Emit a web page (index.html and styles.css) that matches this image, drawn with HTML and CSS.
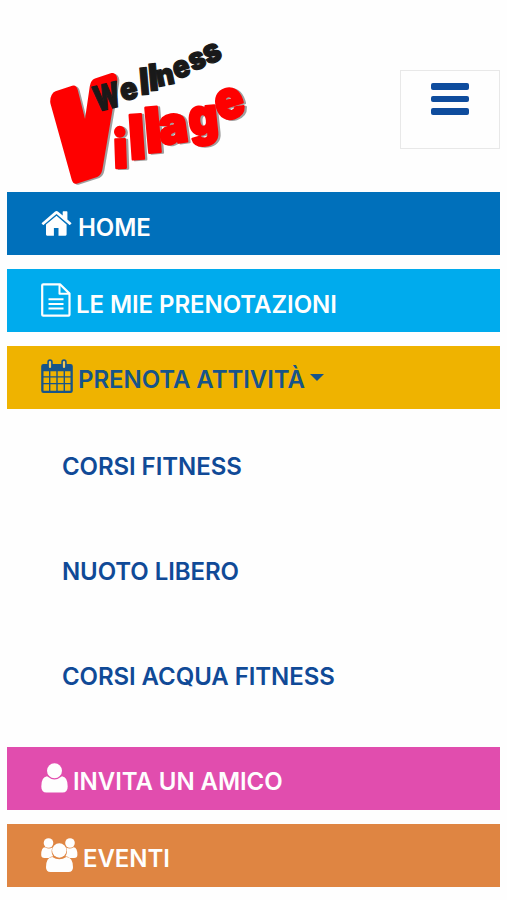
FILE: index.html
```html
<!DOCTYPE html>
<html lang="it">
<head>
<meta charset="utf-8">
<title>Wellness Village</title>
<link rel="stylesheet" href="styles.css">
</head>
<body>
<header class="header">
  <svg class="logo" viewBox="0 0 220 160" role="img" aria-label="Wellness Village">
    <g class="village shadow" transform="translate(2.2 .8)">
      <text class="initial" transform="translate(46.500 142) skewY(-18) skewX(2) scale(.66 1)" font-size="113">V</text>
      <text transform="translate(74 138) rotate(-2) scale(.92 1)" font-size="52">i</text>
      <text transform="translate(90 129.500) rotate(-4) scale(.93 1)" font-size="61">l</text>
      <text transform="translate(106.500 123) rotate(-5) scale(.93 1)" font-size="62">l</text>
      <text transform="translate(121 115) rotate(-8) scale(.93 1)" font-size="52">a</text>
      <text transform="translate(150 106) rotate(-6) scale(.9 1)" font-size="51">g</text>
      <text transform="translate(180 92) rotate(-17) scale(.88 1)" font-size="54">e</text>
    </g>
    <g class="village">
      <text class="initial" transform="translate(46.500 142) skewY(-18) skewX(2) scale(.66 1)" font-size="113">V</text>
      <text transform="translate(74 138) rotate(-2) scale(.92 1)" font-size="52">i</text>
      <text transform="translate(90 129.500) rotate(-4) scale(.93 1)" font-size="61">l</text>
      <text transform="translate(106.500 123) rotate(-5) scale(.93 1)" font-size="62">l</text>
      <text transform="translate(121 115) rotate(-8) scale(.93 1)" font-size="52">a</text>
      <text transform="translate(150 106) rotate(-6) scale(.9 1)" font-size="51">g</text>
      <text transform="translate(180 92) rotate(-17) scale(.88 1)" font-size="54">e</text>
    </g>
    <g class="wellness">
      <text transform="translate(57 82) rotate(-14) scale(.7 1)" font-size="35">W</text>
      <text transform="translate(82.500 71.500) rotate(-14) scale(.93 1)" font-size="31">e</text>
      <text transform="translate(100.500 65) rotate(-5) scale(.9 1)" font-size="37">l</text>
      <text transform="translate(109.500 61) rotate(-5) scale(.9 1)" font-size="37">l</text>
      <text transform="translate(118 57) rotate(-12) scale(.93 1)" font-size="30">n</text>
      <text transform="translate(136 49.500) rotate(-18) scale(.9 1)" font-size="31">e</text>
      <text transform="translate(152.500 41.500) rotate(-20) scale(.9 1)" font-size="31">s</text>
      <text transform="translate(167.500 35) rotate(-22) scale(.9 1)" font-size="33">s</text>
    </g>
  </svg>
  <button class="toggle" aria-label="Menu">
    <span class="bar"></span><span class="bar"></span><span class="bar"></span>
  </button>
</header>
<nav class="menu">
  <a class="item home">
    <svg class="icon" width="32" height="63" viewBox="0 0 32 63" fill="currentColor">
      <path d="M15.500 23.800 5 32.600V42.600q0 1.100 1.100 1.100h6.800v-7.800h4.600v7.800h7q1.100 0 1.100-1.100V32.600z"/>
      <path d="M.5 31.200 13.800 19.800q1.700-1.400 3.400 0l4.500 3.800v-3.700q0-.6.6-.6h3.500q.6 0 .6.6v7.600l4.200 3.700-1.400 1.600q-.5.4-1 0L15.500 22 2.800 32.800q-.5.4-1 0z"/>
    </svg>
    <span class="label">HOME</span>
  </a>
  <a class="item bookings">
    <svg class="icon" width="30" height="63" viewBox="0 0 30 63" fill="none" stroke="currentColor" stroke-width="2.200" stroke-linejoin="round">
      <path d="M1.200 16.300q0-1 1-1H19l9.500 9.300v21.100q0 1-1 1H2.200q-1 0-1-1z"/>
      <path d="M18.500 15.300v9.500h10M7.500 30.300h15M7.500 34.900h15M7.500 39.500h15" stroke-width="2"/>
    </svg>
    <span class="label">LE MIE PRENOTAZIONI</span>
  </a>
  <a class="item activities">
    <svg class="icon" width="32" height="63" viewBox="0 0 32 63">
      <path fill="currentColor" fill-rule="evenodd" d="M2.500 18H29.500q2.300 0 2.300 2.300V44.700q0 2.300-2.300 2.300H2.500Q.2 47 .2 44.700V20.300Q.2 18 2.500 18ZM2.500 25.300V30.200H8V25.300ZM9.400 25.300V30.200H15.300V25.300ZM16.700 25.300V30.200H22.600V25.300ZM24 25.300V30.200H29.500V25.300ZM2.500 31.500V37H8V31.500ZM9.400 31.500V37H15.300V31.500ZM16.700 31.500V37H22.600V31.500ZM24 31.500V37H29.500V31.500ZM2.500 38.300V44.800H8V38.300ZM9.400 38.300V44.800H15.300V38.300ZM16.700 38.300V44.800H22.600V38.300ZM24 38.300V44.800H29.500V38.300Z"/>
      <g stroke-linecap="round"><path d="M9 16v5M23 16v5" stroke="currentColor" stroke-width="5.400"/><path d="M9 16v5M23 16v5" stroke="#f0c860" stroke-width="2.200"/></g>
    </svg>
    <span class="label">PRENOTA ATTIVITÀ</span>
    <span class="caret"></span>
  </a>
  <div class="submenu">
    <a class="subitem">CORSI FITNESS</a>
    <a class="subitem">NUOTO LIBERO</a>
    <a class="subitem">CORSI ACQUA FITNESS</a>
  </div>
  <a class="item invite">
    <svg class="icon" width="27" height="63" viewBox="0 0 27 63" fill="currentColor">
      <circle cx="13.500" cy="23.700" r="7.500"/>
      <path d="M6 29.300Q13.500 35.500 21 29.300 26.700 30 26.700 39.500 26.700 45.500 21.500 45.500H5.500Q.3 45.500.3 39.500.3 30 6 29.300Z"/>
    </svg>
    <span class="label">INVITA UN AMICO</span>
  </a>
  <a class="item events">
    <svg class="icon" width="37" height="63" viewBox="0 0 37 63" fill="currentColor">
      <circle cx="7.500" cy="19" r="4.800"/><circle cx="29" cy="19" r="4.800"/>
      <path d="M4 23.200q4 2.300 7.300.2-1.800 5.300.9 8.800-2.500 0-4.300 1.800H3.500Q.2 34 .2 30.800.2 23.500 4 23.200ZM32.600 23.200q-4 2.300-7.300.2 1.800 5.300-.9 8.800 2.500 0 4.300 1.800h4.400q3.300 0 3.300-3.200 0-7.300-3.800-7.600Z"/>
      <circle cx="18.300" cy="26.500" r="7.200"/>
      <path d="M11.300 32.900q7 4.700 14 0 6.700.5 6.700 10.300 0 4.800-4.500 4.800H9.500Q5 48 5 43.200q0-9.800 6.300-10.300Z"/>
    </svg>
    <span class="label">EVENTI</span>
  </a>
</nav>
</body>
</html>
```
FILE: styles.css
```css
* { box-sizing: border-box; }

body {
  margin: 0;
  background: #fefefe;
  color: #104a97;
  font: 600 24px/30px Inter, "Liberation Sans", sans-serif;
  letter-spacing: -.06px;
}

.header {
  display: flex;
  justify-content: space-between;
  align-items: flex-start;
  height: 192.400px;
  padding: 30px 7px 0 40px;
}

.logo { width: 220px; height: 160px; overflow: visible; }
.logo text { font-family: Inter, "Liberation Sans", sans-serif; font-weight: 900; }
.village { fill: #fe0000; stroke: #fe0000; stroke-width: 2.600; stroke-linejoin: round; }
.village.shadow { fill: #777; stroke: #777; opacity: .7; }
.logo .initial { text-anchor: middle; stroke-width: 17; }
.wellness { fill: #191919; stroke: #191919; stroke-width: 1.300; stroke-linejoin: round; }

.toggle {
  display: flex;
  flex-direction: column;
  align-items: center;
  gap: 6px;
  width: 100px;
  height: 79px;
  margin-top: 40px;
  padding: 12px 0 0;
  border: 1.500px solid #e8e8e8;
  background: #fefefe;
}

.bar { width: 38px; height: 6.500px; border-radius: 2px; background: #0e4c9d; }

.menu {
  display: flex;
  flex-direction: column;
  gap: 13.900px;
  padding: 0 6.600px 0 7.400px;
}

.item {
  display: flex;
  flex: none;
  align-items: center;
  height: 63px;
  padding-left: 33.600px;
  color: #fefefe;
  white-space: nowrap;
}

.icon { flex: none; }
.label { margin: 7.500px 0 0 5px; }

.home { background: #0070bb; }
.bookings { background: #00abed; }
.activities { background: #efb300; color: #17548a; }
.activities .label { margin-top: 4px; }
.invite { background: #e14dae; }
.events { background: #df8542; }

.caret {
  margin-left: 5px;
  border: 7px solid transparent;
  border-top-color: currentColor;
  border-bottom: 0;
}

.submenu {
  display: flex;
  flex-direction: column;
  height: 310px;
  padding-left: 54.500px;
}

.subitem { flex: none; height: 105.300px; padding-top: 28.500px; white-space: nowrap; }
.subitem:last-child { height: 80px; }
```
